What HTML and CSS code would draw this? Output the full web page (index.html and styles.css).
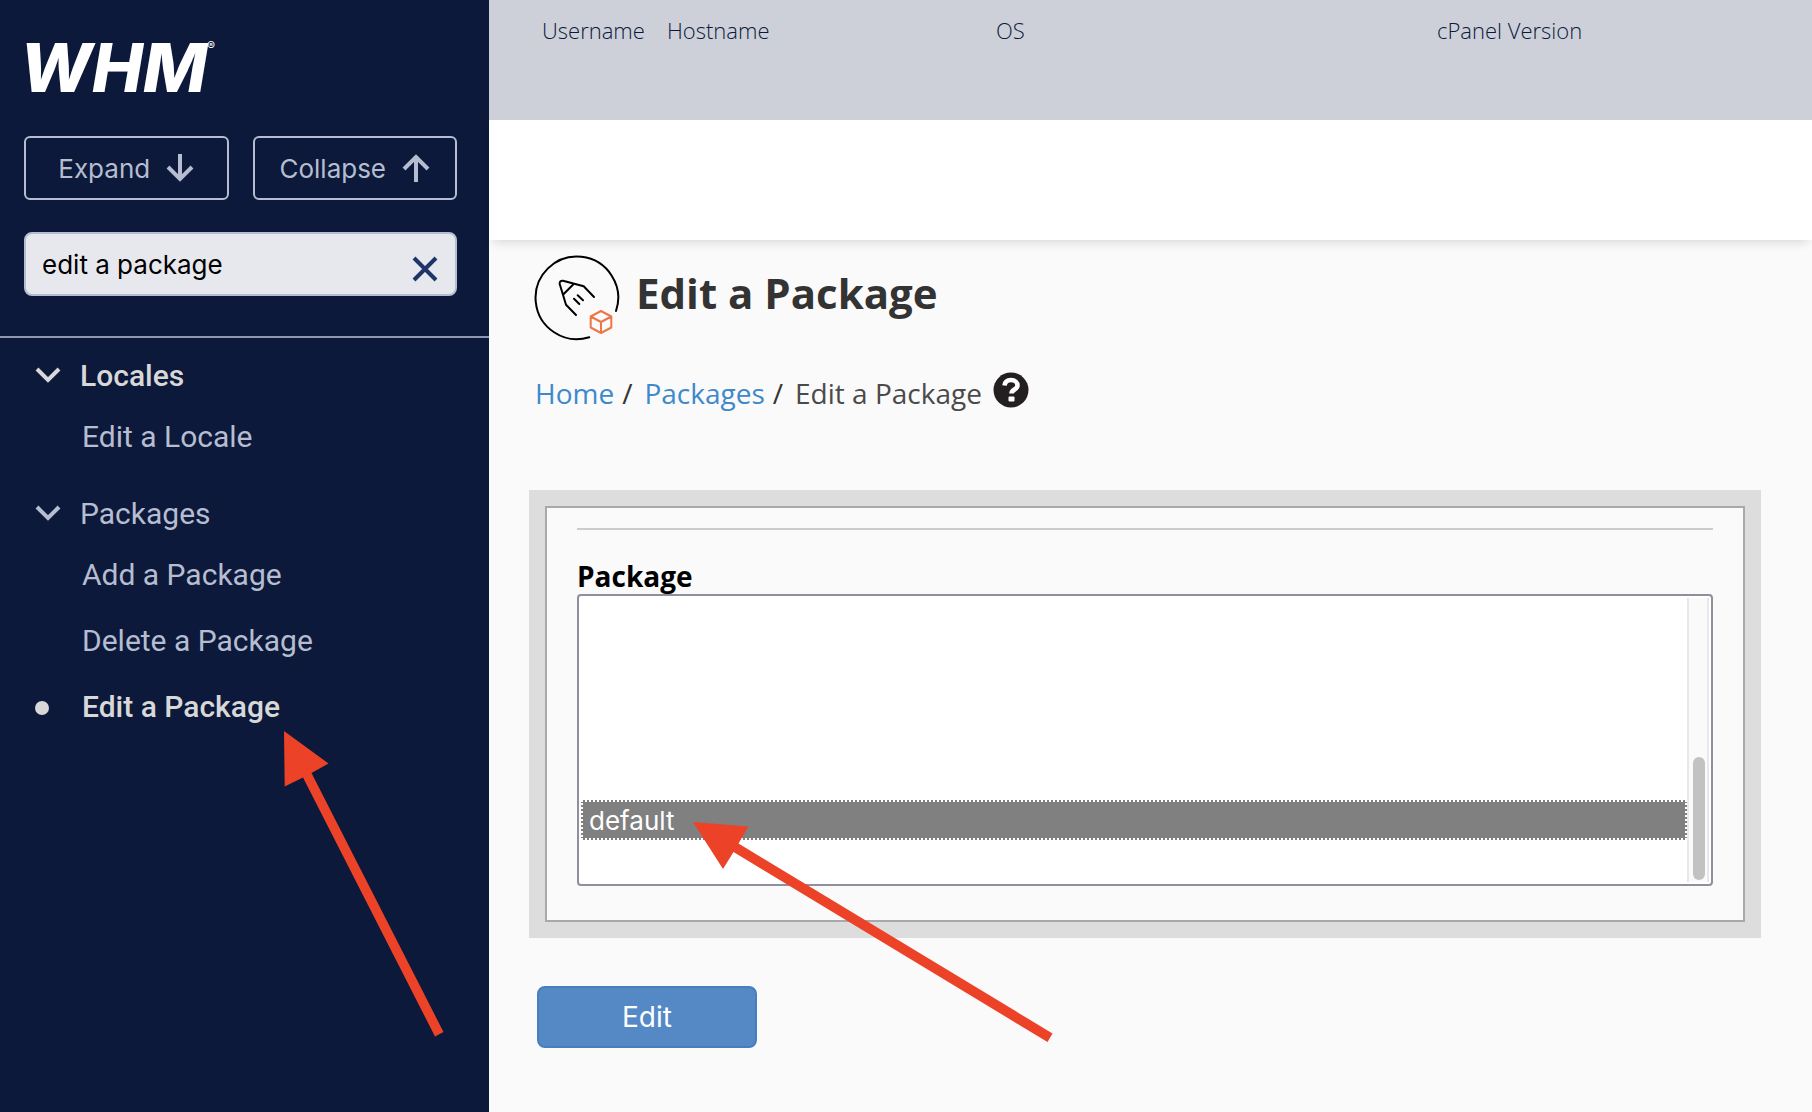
FILE: index.html
```html
<!DOCTYPE html>
<html lang="en">
<head>
  <meta charset="UTF-8">
  <title>Edit a Package</title>
  <link rel="stylesheet" href="styles.css">
</head>
<body>
  <div class="page">
    <aside class="sidebar">
      <div class="sidebar-top">
        <div class="logo">WHM<sup>®</sup></div>
        <div class="toggle-buttons">
          <button type="button">Expand
            <svg width="28" height="28" viewBox="0 0 28 28"><path d="M14 0V26M2 13L14 25L26 13"/></svg>
          </button>
          <button type="button">Collapse
            <svg width="28" height="28" viewBox="0 0 28 28"><path d="M14 28V2M2 15L14 3L26 15"/></svg>
          </button>
        </div>
        <div class="search">
          <input type="text" value="edit a package" aria-label="Search tools">
          <button type="button" class="clear" aria-label="Clear search">
            <svg width="26" height="26" viewBox="0 0 26 26"><path d="M2 2L24 24M24 2L2 24"/></svg>
          </button>
        </div>
      </div>
      <nav class="menu">
        <section>
          <h2 class="active">
            <svg width="26" height="16" viewBox="0 0 26 16"><path d="M2 2L13 13L24 2"/></svg>Locales
          </h2>
          <ul>
            <li><a href="#">Edit a Locale</a></li>
          </ul>
        </section>
        <section>
          <h2>
            <svg width="26" height="16" viewBox="0 0 26 16"><path d="M2 2L13 13L24 2"/></svg>Packages
          </h2>
          <ul>
            <li><a href="#">Add a Package</a></li>
            <li><a href="#">Delete a Package</a></li>
            <li class="current"><a href="#">Edit a Package</a></li>
          </ul>
        </section>
      </nav>
    </aside>

    <div class="content">
      <header class="server-info">
        <span>Username</span>
        <span>Hostname</span>
        <span>OS</span>
        <span>cPanel Version</span>
      </header>
      <div class="toolbar"></div>

      <main>
        <div class="title">
          <svg width="86" height="86" viewBox="0 0 86 86">
            <g class="pencil">
              <path d="M82 56A41.3 41.3 0 1 0 55.3 82.2"/>
              <path d="M42 60L32 49.700L25.700 29Q25.200 25.500 29 25.700L49.700 31.300L60 42M39.700 29L29.700 39M43.700 40.300L49 45.300M40 43.700L45.300 49"/>
            </g>
            <path class="box" d="M67 56L77.300 61.500V72.500L67 78L56.700 72.500V61.500ZM56.700 61.500L67 67L77.300 61.500M67 67V78"/>
          </svg>
          <h1>Edit a Package</h1>
        </div>

        <div class="breadcrumb">
          <a href="#">Home</a><span class="sep">/</span>
          <a href="#">Packages</a><span class="sep">/</span>
          <span>Edit a Package</span>
          <svg width="36" height="36" viewBox="0 0 36 36">
            <circle cx="18" cy="18" r="17.500" fill="#231f20"/>
            <path d="M11.500 13.500C12 9.500 15 8 18 8C22 8 24.500 10.500 24.500 13.500C24.500 17.500 18.500 17.500 18.500 21.500" fill="none" stroke="#fff" stroke-width="4.600"/>
            <rect x="15.500" y="24.500" width="6" height="5" rx="1" fill="#fff"/>
          </svg>
        </div>

        <form>
          <div class="panel">
            <hr>
            <label for="package">Package</label>
            <div class="list-box">
              <select id="package" size="7">
                <option></option><option></option><option></option><option></option>
                <option></option><option></option><option></option><option></option>
                <option></option><option></option><option></option><option></option>
                <option></option><option></option>
                <option selected>default</option>
                <option></option>
              </select>
              <div class="scrollbar"><div class="thumb"></div></div>
            </div>
          </div>
          <button type="button" class="submit">Edit</button>
        </form>
      </main>
    </div>

    <!-- pointers to the menu item and the list entry -->
    <svg class="pointer pointer-menu" width="160" height="306" viewBox="0 0 160 306">
      <path d="M0 0L44.500 32.500L27.500 42L159.500 301L151 305.500L19 46.500L.700 55.500Z"/>
    </svg>
    <svg class="pointer pointer-list" width="360" height="221" viewBox="0 0 360 221">
      <path d="M0 0L55.500 4.500L45.500 21.500L359.500 211.500L354.500 220L40.500 30L30 47Z"/>
    </svg>
  </div>
  <script>
    // show the end of the package list
    const list = document.getElementById('package');
    list.scrollTop = list.scrollHeight;
    window.addEventListener('load', () => {
      list.scrollTop = list.scrollHeight;
    });
  </script>
</body>
</html>
```
FILE: styles.css
```css
* {
  box-sizing: border-box;
}

body {
  margin: 0;
  font-family: "Open Sans", sans-serif;
  background: #fafafa;
  color: #333;
}

a {
  text-decoration: none;
}

.page {
  position: relative;
  display: flex;
  min-height: 100vh;
}

/* sidebar */
.sidebar {
  flex: 0 0 489px;
  background: #0c193b;
  font-family: Roboto, sans-serif;
  color: #b6bdd0;
}

.sidebar-top {
  padding: 32px 32px 40px 24px;
  border-bottom: 2px solid #8f97b0;
}

.logo {
  display: flex;
  height: 70px;
  margin: 0 0 34px -4px;
  color: #fff;
  font-family: Inter, sans-serif;
  font-size: 68px;
  font-weight: 800;
  font-style: italic;
  line-height: 70px;
}

.logo sup {
  padding-top: 8px;
  font-size: 12px;
  font-weight: 400;
  font-style: normal;
  line-height: 12px;
}

.toggle-buttons {
  display: flex;
  gap: 24px;
  margin-bottom: 32px;
}

.toggle-buttons button {
  flex: 1;
  display: flex;
  align-items: center;
  justify-content: center;
  gap: 16px;
  height: 64px;
  padding: 0;
  border: 2px solid #b6bdd0;
  border-radius: 6px;
  background: none;
  color: #b6bdd0;
  font-family: Inter, sans-serif;
  font-size: 26px;
}

.sidebar svg {
  fill: none;
  stroke: currentColor;
  stroke-width: 4;
}

.search {
  position: relative;
}

.search input {
  display: block;
  width: 100%;
  height: 64px;
  padding: 0 64px 0 16px;
  border: 2px solid #b6bdd0;
  border-radius: 8px;
  background: #e6e8ee;
  color: #000;
  font-family: Inter, sans-serif;
  font-size: 26px;
}

.search .clear {
  position: absolute;
  top: 24px;
  right: 19px;
  display: flex;
  padding: 0;
  border: none;
  background: none;
  color: #1f3468;
}

.menu {
  padding: 17px 24px;
  font-size: 30px;
  line-height: 42px;
}

.menu section {
  margin-bottom: 35px;
}

.menu h2 {
  display: flex;
  align-items: center;
  gap: 19px;
  margin: 0 0 19px;
  padding-left: 11px;
  font-size: 30px;
  font-weight: 400;
}

.menu h2 svg {
  margin-bottom: 2px;
}

.menu ul {
  display: flex;
  flex-direction: column;
  gap: 24px;
  margin: 0;
  padding: 0;
  list-style: none;
}

.menu li {
  position: relative;
  padding-left: 58px;
}

.menu a {
  color: inherit;
}

.menu .active,
.menu .current {
  color: #d8d8d8;
  font-weight: 500;
}

.menu .current::before {
  content: "";
  position: absolute;
  left: 11px;
  top: 15px;
  width: 14px;
  height: 14px;
  border-radius: 50%;
  background: #d8d8d8;
}

/* content */
.content {
  flex: 1;
  min-width: 0;
}

.server-info {
  display: grid;
  grid-template-columns: 125px 329px 441px auto;
  height: 120px;
  padding: 14px 53px;
  background: #cdd0d9;
  color: #0c193b;
  font-size: 22px;
  font-weight: 300;
  line-height: 32px;
}

.toolbar {
  height: 120px;
  background: #fff;
  box-shadow: 0 6px 10px -4px rgba(0, 0, 0, 0.15);
}

main {
  padding: 15px 51px 60px 40px;
}

.title {
  display: flex;
  align-items: center;
  gap: 16px;
  padding-left: 5px;
}

.title svg {
  fill: none;
  stroke-width: 2;
  stroke-linecap: round;
  stroke-linejoin: round;
}

.title .pencil {
  stroke: #000;
}

.title .box {
  stroke: #ee7644;
}

h1 {
  margin: 0 0 10px;
  font-size: 42px;
  line-height: 56px;
}

.breadcrumb {
  display: flex;
  align-items: center;
  height: 48px;
  margin: 28px 0 73px;
  padding-left: 6px;
  color: #4a4a4a;
  font-size: 28px;
}

.breadcrumb a {
  color: #3d89cb;
}

.breadcrumb .sep {
  margin: 0 12px 0 8px;
  color: #333;
}

.breadcrumb svg {
  margin: 0 0 6px 11px;
}

form {
  display: flex;
  flex-direction: column;
  align-items: flex-start;
}

.panel {
  align-self: stretch;
  margin: 16px;
  padding: 20px 30px 34px;
  border: 2px solid #a9a9a9;
  outline: 16px solid #ddd;
}

hr {
  height: 2px;
  margin: 0 0 28px;
  border: none;
  background: #ccc;
}

label {
  display: block;
  color: #000;
  font-size: 28px;
  font-weight: 700;
  line-height: 36px;
}

.list-box {
  display: flex;
  height: 292px;
  padding: 2px;
  border: 2px solid #8f8f9d;
  border-radius: 4px;
  background: #fff;
}

select {
  flex: 1;
  min-width: 0;
  height: 100%;
  padding: 0 0 2px;
  border: none;
  background: #fff;
  color: #000;
  font-family: Inter, sans-serif;
  font-size: 26px;
  outline: none;
  scrollbar-width: none;
}

option {
  height: 40px;
  min-height: 40px;
  padding: 3px 6px 0;
  border: 2px solid transparent;
  line-height: 33px;
}

option:checked {
  border: 2px dotted #fff;
  background: #808080 linear-gradient(#808080, #808080);
  color: #fff;
}

.scrollbar {
  display: flex;
  align-items: flex-end;
  justify-content: flex-end;
  width: 22px;
  padding: 2px;
  border: solid #e8e8e8;
  border-width: 0 2px;
  background: #fafafa;
}

.thumb {
  width: 12px;
  height: 44%;
  border-radius: 6px;
  background: #c2c2c2;
}

.submit {
  width: 220px;
  height: 62px;
  margin: 48px 0 0 8px;
  border: 2px solid #4a7dbc;
  border-radius: 8px;
  background: #5589c5;
  color: #fff;
  font-family: Inter, sans-serif;
  font-size: 28px;
}

/* red pointers drawn over the page */
.pointer {
  position: absolute;
  fill: #ec4227;
  pointer-events: none;
}

.pointer-menu {
  left: 284px;
  top: 731px;
}

.pointer-list {
  left: 693px;
  top: 822px;
}
```
